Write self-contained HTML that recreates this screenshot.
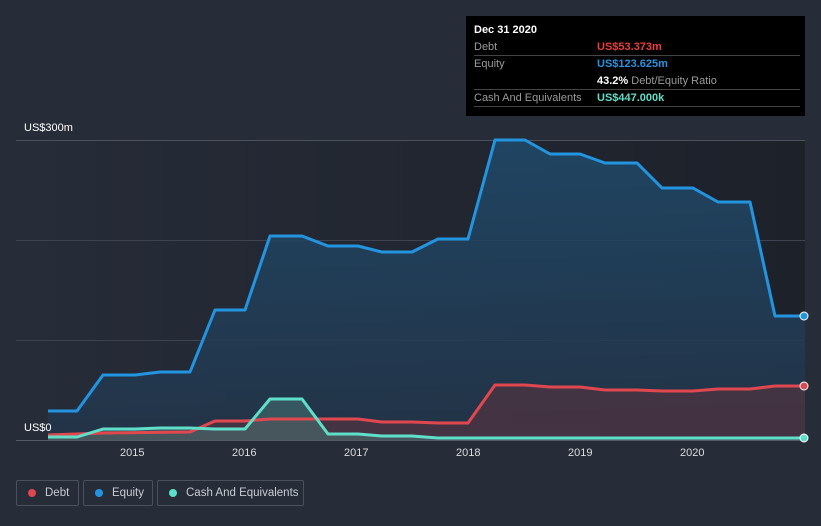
<!DOCTYPE html>
<html><head><meta charset="utf-8"><style>
html,body{margin:0;width:821px;height:526px;overflow:hidden}
body{background:#262c38;font-family:"Liberation Sans",sans-serif;position:relative}
.tt{position:absolute;left:466px;top:16px;width:339px;height:100px;background:#000;color:#fff;font-size:11px}
.tt .r{position:absolute;left:8px;width:326px;border-bottom:1px solid #444;height:16px;line-height:16px}
.tt .l{color:#9a9a9a;position:absolute;left:0}
.tt .v{position:absolute;left:123px;font-weight:bold;white-space:nowrap}
.lab{position:absolute;color:#fff;font-size:11px}
.leg{position:absolute;top:480px;height:26px;border:1px solid #4a505c;border-radius:2px;color:#c8ccd2;font-size:11.5px;line-height:24px;box-sizing:border-box;white-space:nowrap}
.leg i{position:absolute;left:11px;top:8px;width:8px;height:8px;border-radius:50%}
.leg span{position:absolute;left:28px}
</style></head><body>
<svg width="821" height="526" style="position:absolute;left:0;top:0">
<defs>
<linearGradient id="bg" x1="0" x2="1"><stop offset="0" stop-color="#262c38"/><stop offset="1" stop-color="#1d212a"/></linearGradient>
<linearGradient id="eq" x1="0" y1="0" x2="0" y2="1"><stop offset="0" stop-color="#1f4a6b"/><stop offset="1" stop-color="#23354a"/></linearGradient>
</defs>
<rect x="16" y="140" width="789" height="300" fill="url(#bg)"/>
<g stroke="#3d4350" stroke-width="1">
<line x1="16" y1="140.5" x2="805" y2="140.5" stroke="#4a505c"/>
<line x1="16" y1="240.5" x2="805" y2="240.5"/>
<line x1="16" y1="340.5" x2="805" y2="340.5"/>
<line x1="16" y1="440.5" x2="805" y2="440.5" stroke="#555b66"/>
</g>
<polygon fill="url(#eq)" opacity="0.85" points="48,411 77,411 103,375 135,375 160,372 190,372 215,310 245,310 270,236 302,236 328,246 358,246 382,252 412,252 438,239 468,239 495,140 525,140 550,154 580,154 605,163 637,163 662,188 693,188 718,202 750,202 775,316 805,316 805,440 48,440"/>
<polygon fill="#5a3440" opacity="0.6" points="48,435 103,433 190,432 215,421 245,421 270,419 358,419 382,422 412,422 438,423 468,423 495,385 525,385 550,387 580,387 605,390 637,390 662,391 693,391 718,389 750,389 775,386 805,386 805,440 48,440"/>
<polygon fill="#4a7a78" opacity="0.5" points="48,437 77,437 103,429 135,429 160,428 190,428 215,429 245,429 270,399 302,399 328,434 358,434 382,436 412,436 438,438 805,438 805,440 48,440"/>
<g fill="none" stroke-width="3" stroke-linejoin="round">
<polyline stroke="#2394df" points="48,411 77,411 103,375 135,375 160,372 190,372 215,310 245,310 270,236 302,236 328,246 358,246 382,252 412,252 438,239 468,239 495,140 525,140 550,154 580,154 605,163 637,163 662,188 693,188 718,202 750,202 775,316 805,316"/>
<polyline stroke="#e0474f" points="48,435 103,433 190,432 215,421 245,421 270,419 358,419 382,422 412,422 438,423 468,423 495,385 525,385 550,387 580,387 605,390 637,390 662,391 693,391 718,389 750,389 775,386 805,386"/>
<polyline stroke="#5fdfc9" points="48,437 77,437 103,429 135,429 160,428 190,428 215,429 245,429 270,399 302,399 328,434 358,434 382,436 412,436 438,438 805,438"/>
</g>
<circle cx="804" cy="316" r="4" fill="#2394df" stroke="#fff" stroke-width="1"/>
<circle cx="804" cy="386" r="4" fill="#e0474f" stroke="#fff" stroke-width="1"/>
<circle cx="804" cy="438" r="4" fill="#5fdfc9" stroke="#fff" stroke-width="1"/>
</svg>
<div class="lab" style="left:24px;top:122px">US$300m</div>
<div class="lab" style="left:24px;top:422px">US$0</div>
<div class="lab" style="left:120px;top:447px;color:#ddd">2015</div>
<div class="lab" style="left:232px;top:447px;color:#ddd">2016</div>
<div class="lab" style="left:344px;top:447px;color:#ddd">2017</div>
<div class="lab" style="left:456px;top:447px;color:#ddd">2018</div>
<div class="lab" style="left:568px;top:447px;color:#ddd">2019</div>
<div class="lab" style="left:680px;top:447px;color:#ddd">2020</div>
<div class="tt">
<div style="position:absolute;left:8px;top:8px;font-weight:bold">Dec 31 2020</div>
<div class="r" style="top:23px"><span class="l">Debt</span><span class="v" style="color:#e83e3e">US$53.373m</span></div>
<div class="r" style="top:40px;border:none"><span class="l">Equity</span><span class="v" style="color:#2394df">US$123.625m</span></div>
<div class="r" style="top:57px"><span class="v" style="color:#fff">43.2% <span style="color:#9a9a9a;font-weight:normal">Debt/Equity Ratio</span></span></div>
<div class="r" style="top:74px"><span class="l">Cash And Equivalents</span><span class="v" style="color:#5fdfc9">US$447.000k</span></div>
</div>
<div class="leg" style="left:16px;width:63px"><i style="background:#e0474f"></i><span>Debt</span></div>
<div class="leg" style="left:83px;width:70px"><i style="background:#2394df"></i><span>Equity</span></div>
<div class="leg" style="left:157px;width:147px"><i style="background:#5fdfc9"></i><span>Cash And Equivalents</span></div>
</body></html>
